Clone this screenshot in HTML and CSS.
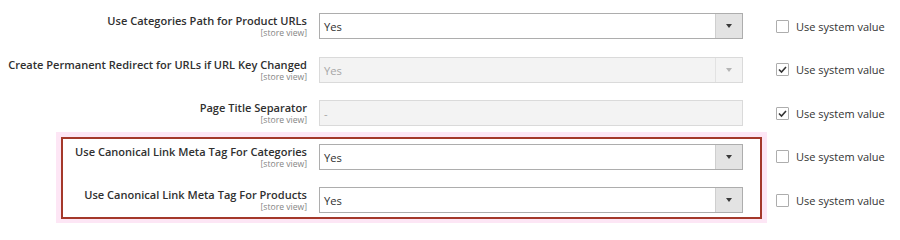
FILE: index.html
```html
<!DOCTYPE html>
<html lang="en">
<head>
<meta charset="utf-8">
<title>SEO settings</title>
<link rel="stylesheet" href="styles.css">
</head>
<body>
<div class="form">
  <div class="row">
    <div class="label"><span class="title">Use Categories Path for Product URLs</span><span class="scope">[store view]</span></div>
    <div class="control select"><span class="value">Yes</span><span class="arrow"><i></i></span></div>
    <label class="use"><span class="box"></span><span>Use system value</span></label>
  </div>
  <div class="row">
    <div class="label"><span class="title">Create Permanent Redirect for URLs if URL Key Changed</span><span class="scope">[store view]</span></div>
    <div class="control select disabled"><span class="value">Yes</span><span class="arrow"><i></i></span></div>
    <label class="use"><span class="box checked"><svg viewBox="0 0 13 13" width="13" height="13"><polyline points="3,6.5 5.5,9 10,4" fill="none" stroke="#333" stroke-width="1.6"/></svg></span><span>Use system value</span></label>
  </div>
  <div class="row">
    <div class="label"><span class="title">Page Title Separator</span><span class="scope">[store view]</span></div>
    <div class="control input disabled"><span class="value">-</span></div>
    <label class="use"><span class="box checked"><svg viewBox="0 0 13 13" width="13" height="13"><polyline points="3,6.5 5.5,9 10,4" fill="none" stroke="#333" stroke-width="1.6"/></svg></span><span>Use system value</span></label>
  </div>
  <div class="group">
    <div class="row">
      <div class="label"><span class="title">Use Canonical Link Meta Tag For Categories</span><span class="scope">[store view]</span></div>
      <div class="control select"><span class="value">Yes</span><span class="arrow"><i></i></span></div>
      <label class="use"><span class="box"></span><span>Use system value</span></label>
    </div>
    <div class="row">
      <div class="label"><span class="title">Use Canonical Link Meta Tag For Products</span><span class="scope">[store view]</span></div>
      <div class="control select"><span class="value">Yes</span><span class="arrow"><i></i></span></div>
      <label class="use"><span class="box"></span><span>Use system value</span></label>
    </div>
  </div>
</div>
</body>
</html>
```
FILE: styles.css
```css
html, body {
  margin: 0;
  padding: 0;
  background: #ffffff;
}
body {
  font-family: "Open Sans", "Noto Sans", "Liberation Sans", sans-serif;
  color: #303030;
  width: 900px;
  height: 223px;
  overflow: hidden;
}
.form {
  padding-top: 13px;
}
.row {
  display: flex;
  align-items: flex-start;
  height: 26px;
  margin-bottom: 17.5px;
}
.label {
  width: 307px;
  flex: none;
  display: flex;
  flex-direction: column;
  align-items: flex-end;
  text-align: right;
}
.title {
  font-size: 11.05px;
  font-weight: 600;
  line-height: 14px;
  padding-top: 1px;
  white-space: nowrap;
}
.scope {
  font-size: 8.6px;
  line-height: 11px;
  color: #858585;
  white-space: nowrap;
}
.control {
  flex: none;
  margin-left: 12px;
  width: 424px;
  height: 26px;
  box-sizing: border-box;
  border: 1px solid #adadad;
  background: #fff;
  display: flex;
  align-items: stretch;
}
.control .value {
  flex: 1;
  padding-left: 4px;
  font-size: 11.2px;
  line-height: 25px;
}
.control .arrow {
  width: 26px;
  flex: none;
  background: #e3e3e3;
  border-left: 1px solid #cfcfcf;
  display: flex;
  align-items: center;
  justify-content: center;
}
.control .arrow i {
  width: 0;
  height: 0;
  border-left: 3px solid transparent;
  border-right: 3px solid transparent;
  border-top: 4px solid #3a3a3a;
}
.control.disabled {
  background: #f3f3f3;
  border-color: #dadada;
}
.control.disabled .value {
  color: #a6a6a6;
}
.control.disabled .arrow {
  background: #f3f3f3;
  border-left-color: #e2e2e2;
}
.control.disabled .arrow i {
  border-top-color: #b5b5b5;
}
.use {
  margin-left: 33px;
  height: 26px;
  display: flex;
  align-items: center;
  gap: 7px;
  font-size: 11px;
  color: #333;
  white-space: nowrap;
}
.box {
  width: 13px;
  height: 13px;
  box-sizing: border-box;
  border: 1px solid #adadad;
  border-radius: 1px;
  background: #fff;
  display: flex;
  align-items: center;
  justify-content: center;
  overflow: hidden;
}
.box svg {
  flex: none;
  display: block;
}
.group {
  position: relative;
}
.group::before {
  content: "";
  position: absolute;
  left: 61px;
  top: -7px;
  width: 701px;
  height: 82px;
  box-sizing: border-box;
  border: 2px solid #a4382a;
  box-shadow: 0 0 0 5px #fde6f5;
  pointer-events: none;
}
```
